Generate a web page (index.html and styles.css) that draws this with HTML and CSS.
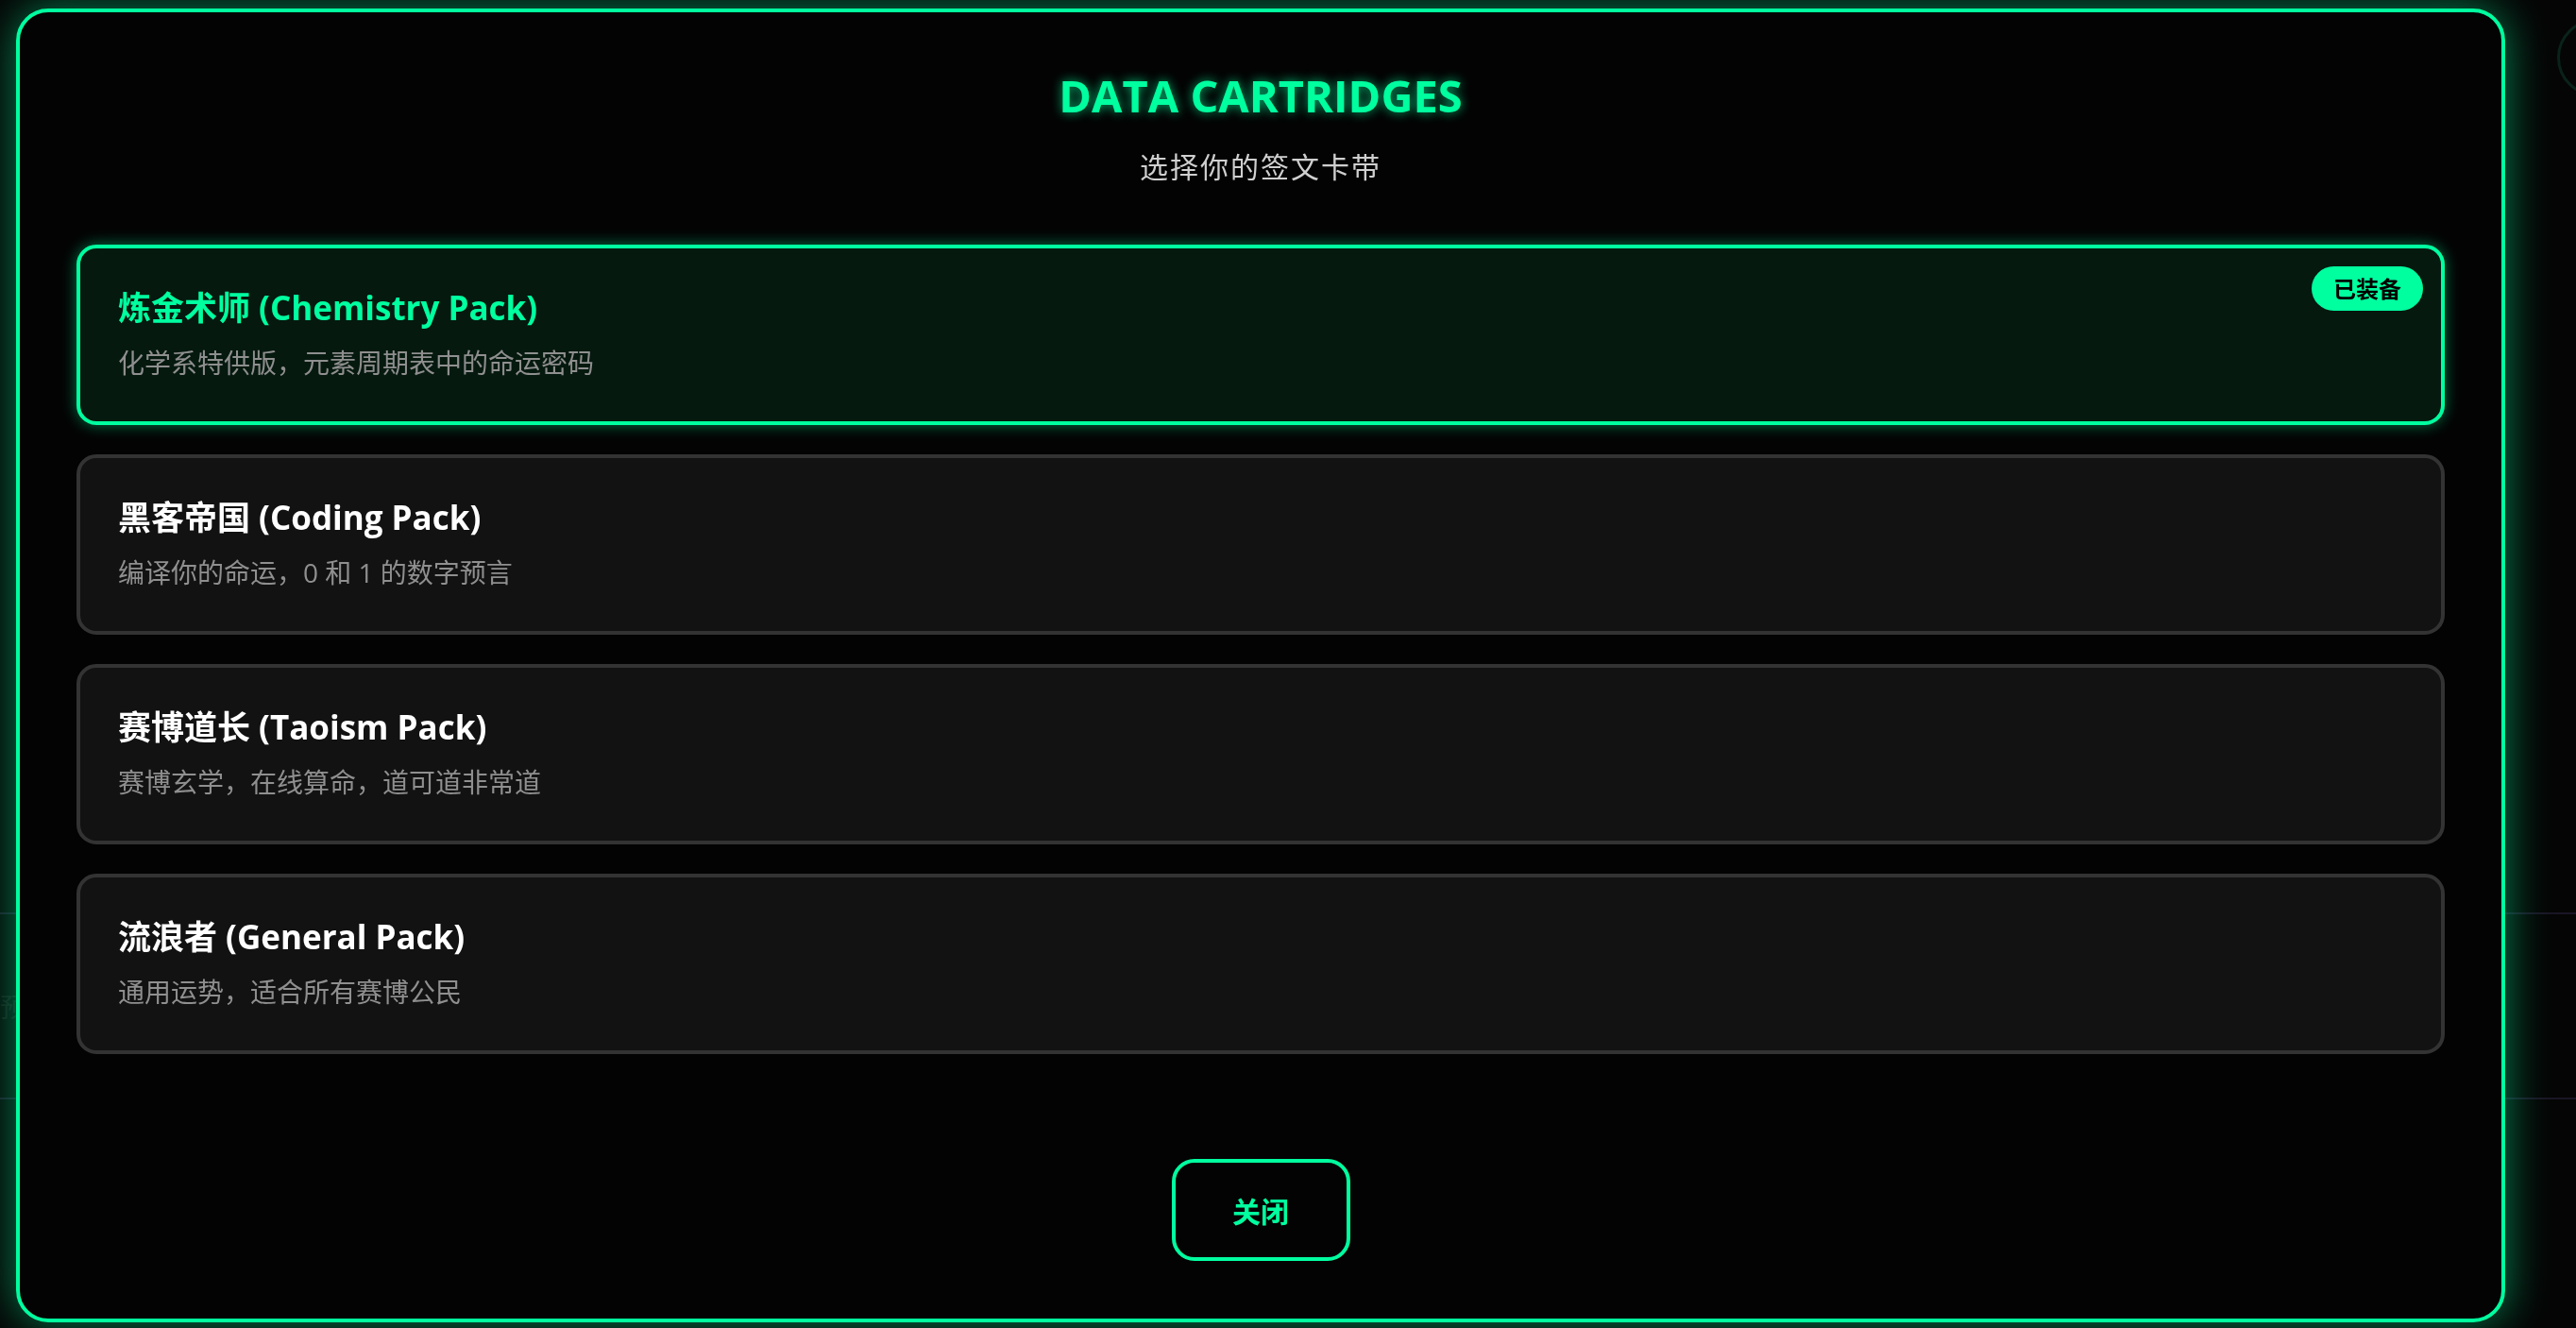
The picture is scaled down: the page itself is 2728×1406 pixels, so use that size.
FILE: index.html
```html
<!DOCTYPE html>
<html lang="zh-CN">
<head>
<meta charset="utf-8">
<title>Data Cartridges</title>
<link rel="stylesheet" href="styles.css">
</head>
<body>
<div class="page">
  <header class="page-head">
    <h1 class="page-title">CYBER FORTUNE</h1>
  </header>
  <section class="page-panel">
    <div class="panel-row">预测</div>
  </section>
  <button class="corner-btn" aria-label="settings"></button>
</div>

<div class="overlay">
  <div class="modal">
    <div class="modal-head">
      <h2 class="modal-title">DATA CARTRIDGES</h2>
      <p class="modal-sub">选择你的签文卡带</p>
    </div>
    <div class="pack-list">
      <div class="pack pack-active">
        <div class="pack-title">炼金术师 (Chemistry Pack)</div>
        <div class="pack-desc">化学系特供版，元素周期表中的命运密码</div>
        <span class="badge">已装备</span>
      </div>
      <div class="pack">
        <div class="pack-title">黑客帝国 (Coding Pack)</div>
        <div class="pack-desc">编译你的命运，0 和 1 的数字预言</div>
      </div>
      <div class="pack">
        <div class="pack-title">赛博道长 (Taoism Pack)</div>
        <div class="pack-desc">赛博玄学，在线算命，道可道非常道</div>
      </div>
      <div class="pack">
        <div class="pack-title">流浪者 (General Pack)</div>
        <div class="pack-desc">通用运势，适合所有赛博公民</div>
      </div>
    </div>
    <div class="modal-foot">
      <button class="close-btn">关闭</button>
    </div>
  </div>
</div>
</body>
</html>
```

FILE: styles.css
```css
html, body {
  margin: 0;
  padding: 0;
  width: 2728px;
  height: 1406px;
  overflow: hidden;
  background: #050505;
  font-family: "Open Sans", "Noto Sans CJK SC", sans-serif;
}

.page {
  position: relative;
  height: 1406px;
  display: flex;
  flex-direction: column;
}

.page-head {
  display: flex;
  justify-content: center;
  padding-top: 112px;
}

.page-title {
  margin: 0;
  font-size: 104px;
  font-weight: 800;
  color: #111;
  letter-spacing: 4px;
  line-height: 1;
}

.page-panel {
  margin-top: 750px;
  border-top: 2px solid #1a1526;
  border-bottom: 2px solid #1a1526;
  height: 194px;
  display: flex;
  align-items: center;
}

.panel-row {
  font-size: 28px;
  color: #151515;
}

.corner-btn {
  position: absolute;
  top: 20px;
  right: -62px;
  width: 82px;
  height: 82px;
  border-radius: 50%;
  border: 3px solid #0a231a;
  background: transparent;
}

.overlay {
  position: fixed;
  inset: 0;
  padding: 9px 0 0 17px;
}

.modal {
  box-sizing: border-box;
  width: 2636px;
  height: 1391px;
  border: 4px solid #00ff9f;
  border-radius: 34px;
  background: rgba(3, 3, 3, 0.97);
  box-shadow: 0 0 46px rgba(0, 255, 159, 0.5);
  padding: 60px 60px 61px;
  display: flex;
  flex-direction: column;
}

.modal-head {
  display: flex;
  flex-direction: column;
  align-items: center;
}

.modal-title {
  margin: 0;
  font-size: 47px;
  line-height: 56px;
  font-weight: 700;
  color: #00ff9f;
  text-shadow: 0 0 12px rgba(0, 255, 159, 0.7);
}

.modal-sub {
  margin: 27px 0 0;
  font-size: 30px;
  line-height: 42px;
  letter-spacing: 2px;
  color: #cfcfcf;
}

.pack-list {
  margin-top: 61px;
  display: flex;
  flex-direction: column;
  gap: 31px;
}

.pack {
  position: relative;
  box-sizing: border-box;
  height: 191px;
  padding: 40px 40px 0;
  background: #121212;
  border: 4px solid #333;
  border-radius: 21px;
}

.pack-active {
  background: #05190f;
  border-color: #00ff9f;
  box-shadow: 0 0 16px rgba(0, 255, 159, 0.45);
}

.pack-title {
  font-size: 35px;
  line-height: 46px;
  font-weight: 700;
  color: #fff;
}

.pack-active .pack-title {
  color: #00ff9f;
}

.pack-desc {
  margin-top: 14px;
  font-size: 28px;
  line-height: 42px;
  color: #8f8f8f;
}

.badge {
  position: absolute;
  top: 19px;
  right: 19px;
  padding: 7px 23px;
  line-height: 33px;
  font-size: 24px;
  font-weight: 700;
  color: #000;
  background: #00ff9f;
  border-radius: 24px;
}

.modal-foot {
  margin-top: auto;
  display: flex;
  justify-content: center;
}

.close-btn {
  box-sizing: border-box;
  width: 189px;
  height: 108px;
  border: 4px solid #00ff9f;
  border-radius: 24px;
  background: transparent;
  color: #00ff9f;
  font-family: "Open Sans", "Noto Sans CJK SC", sans-serif;
  font-size: 30px;
  font-weight: 700;
}
```
